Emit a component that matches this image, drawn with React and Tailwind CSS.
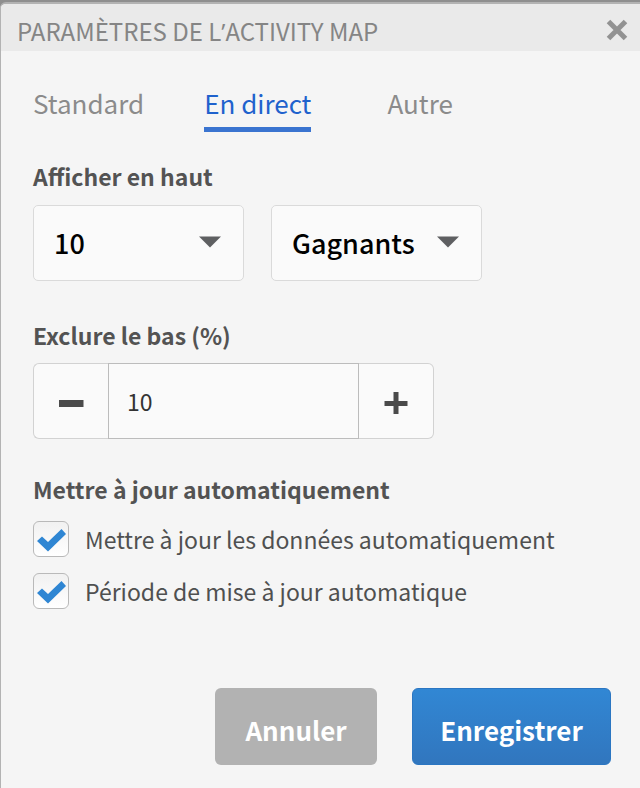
import { useState } from "react";

const tabs = ["Standard", "En direct", "Autre"];

function Dropdown({ label, options }) {
  return (
    <div className="relative w-[211px]">
      <select
        aria-label={label}
        className="block h-[76px] w-full appearance-none rounded-[5px] border border-[#dadada] bg-[#fafafa] pl-5 text-[27px] leading-[48px] font-medium text-black"
      >
        {options.map((option) => (
          <option key={option}>{option}</option>
        ))}
      </select>
      <svg
        viewBox="0 0 22 12"
        className="pointer-events-none absolute top-[31px] right-[23px] h-3 w-[22px]"
        aria-hidden="true"
      >
        <path d="M0 0.5H22L11 11.5Z" fill="#5e5f61" />
      </svg>
    </div>
  );
}

function CheckRow({ id, children }) {
  return (
    <div className="flex items-center gap-4">
      <span className="grid h-9 w-9 shrink-0">
        <input
          id={id}
          type="checkbox"
          defaultChecked
          className="peer col-start-1 row-start-1 h-9 w-9 appearance-none rounded-[6px] border border-[#b9b9b9] bg-linear-to-b from-[#f1f1f1] to-white"
        />
        <svg
          viewBox="0 0 36 36"
          className="pointer-events-none invisible col-start-1 row-start-1 h-9 w-9 peer-checked:visible"
          aria-hidden="true"
        >
          <path d="M4 20L9 15.500L15 21L28.500 8L33 13L15 30.500Z" fill="#2f86d3" />
        </svg>
      </span>
      <label htmlFor={id} className="text-[23px] leading-9 text-[#4f5050]">
        {children}
      </label>
    </div>
  );
}

export default function App() {
  const [active, setActive] = useState("En direct");
  const [percent, setPercent] = useState(10);

  return (
    <div className="min-h-screen border-t-2 border-[#8f8f8f] bg-[#8f8f8f] font-['Noto_Sans_CJK_SC',sans-serif]">
      <main className="min-h-[calc(100vh-2px)] overflow-hidden rounded-tl-[6px] border-t-2 border-l border-[#b3b3b3] bg-[#f5f5f5]">
        <header className="flex h-[47px] items-center justify-between bg-[#eaeaea] pr-3 pl-4">
          <h1 className="pt-2 text-[24px] leading-9 text-[#858585]">
            PARAMÈTRES DE L<span className="font-['Open_Sans',sans-serif]">’</span>ACTIVITY MAP
          </h1>
          <button type="button" aria-label="Fermer" className="pt-1">
            <svg viewBox="0 0 22 22" className="h-[22px] w-[22px]" aria-hidden="true">
              <path d="M2.500 2.500L19.500 19.500M19.500 2.500L2.500 19.500" stroke="#929292" strokeWidth="5" />
            </svg>
          </button>
        </header>

        <form className="px-8 pb-6" onSubmit={(event) => event.preventDefault()}>
          <div role="tablist" className="flex pt-8">
            {tabs.map((tab) => (
              <button
                key={tab}
                type="button"
                role="tab"
                aria-selected={active === tab}
                onClick={() => setActive(tab)}
                className={
                  active === tab
                    ? "mr-[76px] ml-[60px] border-b-5 border-[#3a74d0] pb-1 text-[26px] leading-10 text-[#1f62cd]"
                    : "border-b-5 border-transparent pb-1 text-[26px] leading-10 text-[#8b8b8b]"
                }
              >
                {tab}
              </button>
            ))}
          </div>

          <h2 className="mt-[26px] text-[23px] leading-9 font-bold text-[#535353]">Afficher en haut</h2>
          <div className="mt-[11px] flex gap-[27px]">
            <Dropdown label="Nombre" options={["10", "20", "50"]} />
            <Dropdown label="Type" options={["Gagnants", "Perdants"]} />
          </div>

          <label htmlFor="exclude" className="mt-9 block text-[23px] leading-9 font-bold text-[#535353]">
            Exclure le bas (%)
          </label>
          <div className="mt-[10px] flex h-[76px] w-[401px]">
            <button
              type="button"
              aria-label="Diminuer"
              onClick={() => setPercent(Number(percent) - 1)}
              className="grid w-[75px] place-items-center rounded-l-[6px] border border-r-0 border-[#d2d2d2] bg-[#fafafa]"
            >
              <svg viewBox="0 0 26 26" className="h-[26px] w-[26px]" aria-hidden="true">
                <path d="M1 15.500H25.500" stroke="#4a4a4a" strokeWidth="7" />
              </svg>
            </button>
            <input
              id="exclude"
              type="text"
              value={percent}
              onChange={(event) => setPercent(event.target.value)}
              className="w-[251px] border border-[#bcbcbc] bg-[#fafafa] px-[18px] text-[23px] leading-9 text-[#333]"
            />
            <button
              type="button"
              aria-label="Augmenter"
              onClick={() => setPercent(Number(percent) + 1)}
              className="grid w-[75px] place-items-center rounded-r-[6px] border border-l-0 border-[#d2d2d2] bg-[#fafafa]"
            >
              <svg viewBox="0 0 26 26" className="h-[26px] w-[26px]" aria-hidden="true">
                <path d="M1.500 15.500H24.500M13 4V26" stroke="#4a4a4a" strokeWidth="5" />
              </svg>
            </button>
          </div>

          <fieldset className="mt-8">
            <legend className="text-[23px] leading-9 font-bold text-[#535353]">Mettre à jour automatiquement</legend>
            <div className="mt-[14px] flex flex-col gap-4">
              <CheckRow id="auto-data">Mettre à jour les données automatiquement</CheckRow>
              <CheckRow id="auto-période">Période de mise à jour automatique</CheckRow>
            </div>
          </fieldset>

          <div className="-mr-[3px] mt-[79px] flex justify-end gap-[35px] text-[26px] leading-10 font-bold text-white">
            <button type="button" className="h-[77px] w-[162px] rounded-[6px] bg-[#b2b2b2] pt-[6px]">
              Annuler
            </button>
            <button
              type="submit"
              className="h-[77px] w-[199px] rounded-[6px] border border-[#2b76c2] bg-linear-to-b from-[#3187d4] to-[#3176be] pt-[6px]"
            >
              Enregistrer
            </button>
          </div>
        </form>
      </main>
    </div>
  );
}
